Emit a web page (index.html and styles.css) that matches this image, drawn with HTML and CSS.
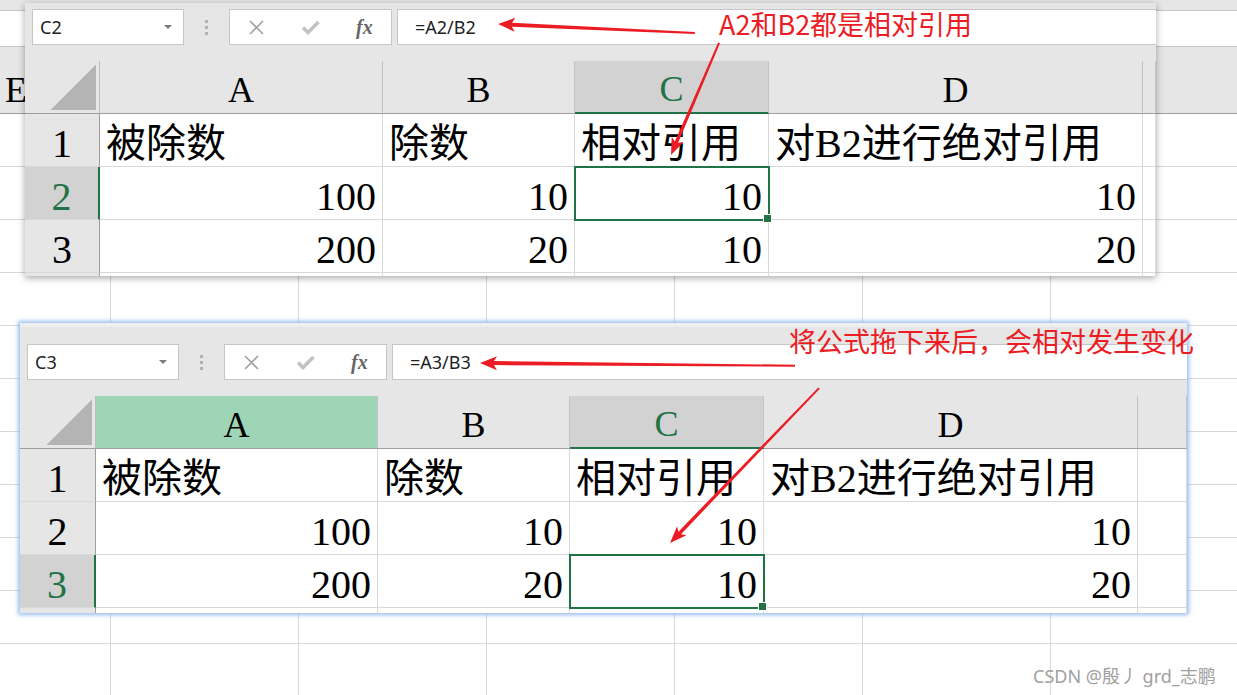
FILE: index.html
```html
<!DOCTYPE html>
<html lang="zh-CN">

<head>
    <meta charset="UTF-8">
    <meta name="viewport" content="width=device-width, initial-scale=1.0">
    <title>相对引用</title>
    <link rel="stylesheet" href="styles.css">
</head>

<body>
    <div class="page">
        <!-- sheet behind the two snips -->
        <div class="backdrop">
            <div class="bg-strip"></div>
            <div class="bg-bar"></div>
            <div class="bg-head"><div class="bg-col">E</div></div>
            <div class="bg-grid"></div>
        </div>

        <!-- first snip: C2 -->
        <div class="shot shot-top">
            <div class="toolbar">
                <div class="namebox">C2<span class="caret"></span></div>
                <div class="grip"><i></i><i></i><i></i></div>
                <div class="tools">
                    <svg width="17" height="17" viewBox="0 0 17 17"><path d="M2 2 L15 15 M15 2 L2 15" stroke="#a3a3a3" stroke-width="1.6" fill="none"/></svg>
                    <svg width="19" height="15" viewBox="0 0 19 15"><path d="M2 7.5 L7 12.5 L17.5 2" stroke="#c2c2c2" stroke-width="3.6" fill="none"/></svg>
                    <span class="fx">fx</span>
                </div>
                <div class="formula">=A2/B2</div>
            </div>
            <div class="sheet">
                <div class="cell corner"></div>
                <div class="cell head">A</div>
                <div class="cell head">B</div>
                <div class="cell head on">C</div>
                <div class="cell head">D</div>
                <div class="cell head"></div>

                <div class="cell row-head">1</div>
                <div class="cell">被除数</div>
                <div class="cell">除数</div>
                <div class="cell">相对引用</div>
                <div class="cell">对B2进行绝对引用</div>
                <div class="cell"></div>

                <div class="cell row-head on">2</div>
                <div class="cell num">100</div>
                <div class="cell num">10</div>
                <div class="cell num sel">10</div>
                <div class="cell num">10</div>
                <div class="cell"></div>

                <div class="cell row-head">3</div>
                <div class="cell num">200</div>
                <div class="cell num">20</div>
                <div class="cell num">10</div>
                <div class="cell num">20</div>
                <div class="cell"></div>

                <div class="cell row-head"></div>
                <div class="cell"></div>
                <div class="cell"></div>
                <div class="cell"></div>
                <div class="cell"></div>
                <div class="cell"></div>
            </div>
        </div>

        <!-- second snip: C3 -->
        <div class="shot shot-bottom">
            <div class="toolbar">
                <div class="namebox">C3<span class="caret"></span></div>
                <div class="grip"><i></i><i></i><i></i></div>
                <div class="tools">
                    <svg width="17" height="17" viewBox="0 0 17 17"><path d="M2 2 L15 15 M15 2 L2 15" stroke="#a3a3a3" stroke-width="1.6" fill="none"/></svg>
                    <svg width="19" height="15" viewBox="0 0 19 15"><path d="M2 7.5 L7 12.5 L17.5 2" stroke="#c2c2c2" stroke-width="3.6" fill="none"/></svg>
                    <span class="fx">fx</span>
                </div>
                <div class="formula">=A3/B3</div>
            </div>
            <div class="sheet">
                <div class="cell corner"></div>
                <div class="cell head pick">A</div>
                <div class="cell head">B</div>
                <div class="cell head on">C</div>
                <div class="cell head">D</div>
                <div class="cell head"></div>

                <div class="cell row-head">1</div>
                <div class="cell">被除数</div>
                <div class="cell">除数</div>
                <div class="cell">相对引用</div>
                <div class="cell">对B2进行绝对引用</div>
                <div class="cell"></div>

                <div class="cell row-head">2</div>
                <div class="cell num">100</div>
                <div class="cell num">10</div>
                <div class="cell num">10</div>
                <div class="cell num">10</div>
                <div class="cell"></div>

                <div class="cell row-head on">3</div>
                <div class="cell num">200</div>
                <div class="cell num">20</div>
                <div class="cell num sel">10</div>
                <div class="cell num">20</div>
                <div class="cell"></div>

                <div class="cell row-head"></div>
                <div class="cell"></div>
                <div class="cell"></div>
                <div class="cell"></div>
                <div class="cell"></div>
                <div class="cell"></div>
            </div>
        </div>

        <!-- red annotations -->
        <svg class="marks" width="1237" height="695" viewBox="0 0 1237 695">
            <g fill="#ec1c24">
                <polygon transform="translate(498 24) rotate(2.6)" points="0,0 17,-7 14,-2 197,-1 197,1 14,2 17,7"/>
                <polygon transform="translate(671 155) rotate(-66.8)" points="0,0 17,-6.5 14,-1.8 122,-1 122,1 14,1.8 17,6.5"/>
                <polygon transform="translate(480 363) rotate(0.5)" points="0,0 17,-7 14,-2 315,-1 315,1 14,2 17,7"/>
                <polygon transform="translate(670 543) rotate(-46.1)" points="0,0 17,-6.5 14,-1.8 215,-1 215,1 14,1.8 17,6.5"/>
            </g>
        </svg>
        <div class="note note-top">A2和B2都是相对引用</div>
        <div class="note note-bottom">将公式拖下来后，会相对发生变化</div>

        <div class="watermark">CSDN @殷丿 grd_志鹏</div>
    </div>
</body>

</html>
```

FILE: styles.css
```css
* {
    box-sizing: border-box;
}

body {
    margin: 0;
    background: #fff;
    font-family: "Noto Sans", "Noto Sans CJK SC", sans-serif;
}

.page {
    position: relative;
    width: 1237px;
    height: 695px;
    overflow: hidden;
}

/* background sheet */
.backdrop {
    display: flex;
    flex-direction: column;
    height: 100%;
}

.bg-strip {
    height: 11px;
    background: #e6e6e6;
    border-bottom: 1px solid #c8c8c8;
}

.bg-bar {
    height: 36px;
    background: #fff;
    border-bottom: 1px solid #c8c8c8;
}

.bg-head {
    height: 67px;
    display: flex;
    align-items: flex-end;
    background: #e6e6e6;
    border-bottom: 1px solid #9e9e9e;
}

.bg-col {
    width: 32px;
    text-align: center;
    font: 36px/45px "Liberation Serif", serif;
}

.bg-grid {
    flex: 1;
    background-image:
        linear-gradient(to bottom, transparent 52px, #d9d9d9 52px),
        linear-gradient(to right, transparent 187px, #d9d9d9 187px);
    background-size: 100% 53px, 188px 100%;
    background-position: 0 0, -77px 0;
}

/* snips */
.shot {
    position: absolute;
    display: flex;
    flex-direction: column;
    overflow: hidden;
    background: #e6e6e6;
}

.shot-top {
    left: 25px;
    top: 3px;
    width: 1131px;
    height: 273px;
    padding-top: 6px;
    box-shadow: 0 2px 7px rgba(0, 0, 0, 0.35);
}

.shot-bottom {
    left: 20px;
    top: 323px;
    width: 1167px;
    height: 290px;
    padding-top: 17px;
    border-top: 4px solid #efefef;
    box-shadow: 0 0 4px 2px rgba(120, 170, 235, 0.75);
}

.toolbar {
    display: flex;
    flex-shrink: 0;
    height: 36px;
    padding-left: 7px;
}

.namebox {
    width: 152px;
    display: flex;
    align-items: center;
    justify-content: space-between;
    padding: 0 11px 0 7px;
    background: #fff;
    border: 1px solid #c6c6c6;
    font-size: 18px;
    color: #222;
}

.caret {
    border-left: 4px solid transparent;
    border-right: 4px solid transparent;
    border-top: 4px solid #7a7a7a;
}

.grip {
    width: 45px;
    display: flex;
    flex-direction: column;
    align-items: center;
    justify-content: center;
    gap: 3px;
}

.grip i {
    width: 3px;
    height: 3px;
    background: #b0b0b0;
}

.tools {
    width: 163px;
    display: flex;
    align-items: center;
    gap: 36px;
    padding-left: 18px;
    background: #fff;
    border: 1px solid #c6c6c6;
}

.fx {
    font: italic bold 20px "Liberation Serif", serif;
    color: #666;
}

.formula {
    flex: 1;
    display: flex;
    align-items: center;
    margin-left: 5px;
    padding-left: 17px;
    background: #fff;
    border: 1px solid #c6c6c6;
    border-right: 0;
    font-size: 18px;
    color: #222;
}

/* grid */
.sheet {
    display: grid;
    grid-template-columns: 75px 283px 192px 194px 374px 1fr;
    grid-auto-rows: 53px;
    margin-top: 16px;
}

.shot-bottom .sheet {
    grid-template-columns: 76px 282px 192px 194px 374px 1fr;
}

.cell {
    display: flex;
    align-items: flex-end;
    padding: 0 6px;
    background: #fff;
    border-right: 1px solid #d9d9d9;
    border-bottom: 1px solid #d9d9d9;
    font: 40px/45px "Liberation Serif", "Noto Sans CJK SC", serif;
    color: #000;
    white-space: nowrap;
}

.num {
    justify-content: flex-end;
}

.corner {
    background: linear-gradient(to bottom right, transparent 50%, #b4b4b4 50%) no-repeat right 3px bottom 3px / 45px 45px, #e6e6e6;
    border-right-color: #bdbdbd;
    border-bottom-color: #9e9e9e;
}

.head {
    justify-content: center;
    background: #e6e6e6;
    border-right-color: #c4c4c4;
    border-bottom-color: #9e9e9e;
    font-size: 36px;
}

.head.on {
    background: #d2d2d2;
    color: #217346;
    border-bottom: 2px solid #217346;
}

.head.pick {
    background: #9fd5b7;
}

.row-head {
    justify-content: center;
    background: #e6e6e6;
    border-right-color: #9e9e9e;
}

.row-head.on {
    background: #d2d2d2;
    color: #217346;
    border-right: 2px solid #217346;
}

.sel {
    position: relative;
    outline: 2px solid #217346;
    outline-offset: -1px;
}

.sel::after {
    content: "";
    position: absolute;
    right: -4px;
    bottom: -4px;
    width: 7px;
    height: 7px;
    background: #217346;
    border: 1px solid #fff;
}

/* annotations */
.marks {
    position: absolute;
    left: 0;
    top: 0;
    pointer-events: none;
}

.note {
    position: absolute;
    font: 27px/27px "Noto Sans CJK SC", sans-serif;
    color: #ec1c24;
    white-space: nowrap;
}

.note-top {
    left: 719px;
    top: 10px;
}

.note-bottom {
    left: 789px;
    top: 327px;
}

.watermark {
    position: absolute;
    left: 1033px;
    top: 662px;
    font: 18px "Noto Sans", "Noto Sans CJK SC", sans-serif;
    color: #a0a0a0;
    white-space: nowrap;
}
```
